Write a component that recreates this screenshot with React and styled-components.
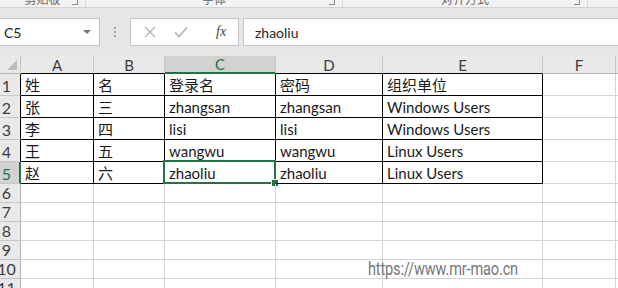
import React from "react";
import styled, { createGlobalStyle } from "styled-components";

const GlobalStyle = createGlobalStyle`
  html, body {
    margin: 0;
    padding: 0;
    background: #ffffff;
    overflow: hidden;
  }
  body {
    font-family: Lato, "Noto Sans CJK SC", sans-serif;
  }
`;

const green = "#217346";
const gridLine = "#d4d4d4";

const columns = [
  { name: "A", width: 73 },
  { name: "B", width: 71 },
  { name: "C", width: 111 },
  { name: "D", width: 107 },
  { name: "E", width: 160 },
  { name: "F", width: 73 },
];

const data = [
  ["姓", "名", "登录名", "密码", "组织单位"],
  ["张", "三", "zhangsan", "zhangsan", "Windows Users"],
  ["李", "四", "lisi", "lisi", "Windows Users"],
  ["王", "五", "wangwu", "wangwu", "Linux Users"],
  ["赵", "六", "zhaoliu", "zhaoliu", "Linux Users"],
];

const ribbonGroups = [
  { label: "剪贴板", width: 86 },
  { label: "字体", width: 257 },
  { label: "对齐方式", width: 245 },
];

const Page = styled.div`
  width: 618px;
  height: 288px;
  display: flex;
  flex-direction: column;
  overflow: hidden;
  background: #e6e6e6;
`;

const RibbonEdge = styled.div`
  height: 7px;
  background: #f3f3f3;
  border-bottom: 1px solid #d2d2d2;
  display: flex;
  overflow: hidden;
  flex-shrink: 0;
`;

const RibbonGroup = styled.div`
  width: ${(p) => p.$width}px;
  flex-shrink: 0;
  position: relative;
  border-right: 1px solid #d8d8d8;
  display: flex;
  justify-content: center;
  box-sizing: border-box;
`;

const GroupLabel = styled.span`
  font-size: 12px;
  line-height: 12px;
  margin-top: -7px;
  color: #6a6a6a;
  font-family: "Noto Sans CJK SC", sans-serif;
`;

const Launcher = styled.span`
  position: absolute;
  right: 7px;
  top: 0;
  width: 5px;
  height: 4px;
  border-right: 1px solid #8a8a8a;
  border-bottom: 1px solid #8a8a8a;
`;

const FormulaBar = styled.div`
  height: 48px;
  display: flex;
  align-items: flex-start;
  padding-top: 10px;
  box-sizing: border-box;
  flex-shrink: 0;
`;

const NameBox = styled.div`
  width: 100px;
  height: 28px;
  box-sizing: border-box;
  background: #ffffff;
  border: 1px solid #c6c6c6;
  border-left: none;
  display: flex;
  align-items: center;
  justify-content: space-between;
  padding: 0 8px 0 4px;
  font-size: 14px;
  color: #262626;
`;

const DropArrow = styled.span`
  width: 0;
  height: 0;
  border-left: 4px solid transparent;
  border-right: 4px solid transparent;
  border-top: 4px solid #777777;
`;

const Grip = styled.div`
  width: 30px;
  height: 28px;
  display: flex;
  flex-direction: column;
  align-items: center;
  justify-content: center;
  gap: 2px;
`;

const GripDot = styled.span`
  width: 2px;
  height: 2px;
  background: #a6a6a6;
`;

const ActionBox = styled.div`
  width: 109px;
  height: 28px;
  box-sizing: border-box;
  background: #ffffff;
  border: 1px solid #c6c6c6;
  display: flex;
  align-items: center;
  padding-left: 13px;
  gap: 18px;
`;

const FxLabel = styled.span`
  font-family: "Liberation Serif", serif;
  font-style: italic;
  font-size: 14px;
  color: #444444;
  margin-left: 10px;
`;

const FormulaInput = styled.div`
  flex: 1;
  margin-left: 4px;
  height: 28px;
  box-sizing: border-box;
  background: #ffffff;
  border: 1px solid #c6c6c6;
  border-right: none;
  display: flex;
  align-items: center;
  padding-left: 11px;
  font-size: 14px;
  color: #262626;
`;

const SheetArea = styled.div`
  position: relative;
  flex: 1;
  background: #ffffff;
`;

const Grid = styled.div`
  display: grid;
  grid-template-columns: 21px ${columns.map((c) => `${c.width}px`).join(" ")} 1fr;
  grid-template-rows: 18px repeat(5, 22px) repeat(6, 19px);
`;

const Corner = styled.div`
  position: relative;
  background: #e9e9e9;
  border-right: 1px solid #c6c6c6;
  border-bottom: 1px solid #b4b4b4;
  box-sizing: border-box;
  &::after {
    content: "";
    position: absolute;
    right: 3px;
    bottom: 3px;
    width: 0;
    height: 0;
    border-left: 10px solid transparent;
    border-bottom: 10px solid #bdbdbd;
  }
`;

const ColHead = styled.div`
  box-sizing: border-box;
  background: ${(p) => (p.$active ? "#d2d2d2" : "#e9e9e9")};
  color: ${(p) => (p.$active ? green : "#3c3c3c")};
  border-right: 1px solid #c6c6c6;
  border-bottom: ${(p) =>
    p.$active ? `2px solid ${green}` : p.$boxed ? "1px solid #000" : "1px solid #b4b4b4"};
  display: flex;
  align-items: center;
  justify-content: center;
  font-size: 15px;
  line-height: 18px;
`;

const RowHead = styled.div`
  box-sizing: border-box;
  background: ${(p) => (p.$active ? "#d2d2d2" : "#e9e9e9")};
  color: ${(p) => (p.$active ? green : "#3c3c3c")};
  border-right: ${(p) =>
    p.$active ? `2px solid ${green}` : p.$boxed ? "1px solid #000" : "1px solid #b4b4b4"};
  border-bottom: 1px solid #c6c6c6;
  display: flex;
  align-items: flex-end;
  justify-content: center;
  padding-right: ${(p) => (p.$active ? 6 : 7)}px;
  font-size: 16px;
  line-height: 19px;
`;

const Cell = styled.div`
  position: relative;
  box-sizing: border-box;
  border-right: 1px solid ${(p) => (p.$boxed ? "#000" : gridLine)};
  border-bottom: 1px solid ${(p) => (p.$boxed ? "#000" : gridLine)};
  display: flex;
  align-items: flex-end;
  padding: 0 3px 0 4px;
  font-size: 15px;
  line-height: 20px;
  color: #1a1a1a;
  white-space: nowrap;
`;

const Selection = styled.div`
  position: absolute;
  left: -2px;
  top: -2px;
  right: -1px;
  bottom: -1px;
  border: 2px solid ${green};
  pointer-events: none;
  &::after {
    content: "";
    position: absolute;
    right: -5px;
    bottom: -5px;
    width: 6px;
    height: 6px;
    background: ${green};
    border: 1px solid #ffffff;
  }
`;

const Watermark = styled.div`
  position: absolute;
  left: 368px;
  top: 202px;
  font-family: Roboto, sans-serif;
  font-size: 18px;
  color: #777777;
  letter-spacing: -0.2px;
  transform: scaleX(0.81);
  transform-origin: left center;
`;

const CrossIcon = () => (
  <svg width="12" height="12" viewBox="0 0 12 12">
    <path d="M1 1 L11 11 M11 1 L1 11" stroke="#b3b3b3" strokeWidth="1.4" fill="none" />
  </svg>
);

const CheckIcon = () => (
  <svg width="14" height="12" viewBox="0 0 14 12">
    <path d="M1 6.5 L5 10.5 L13 1.5" stroke="#b3b3b3" strokeWidth="1.6" fill="none" />
  </svg>
);

const App = () => {
  const totalRows = 11;
  return (
    <Page>
      <GlobalStyle />
      <RibbonEdge>
        {ribbonGroups.map((g) => (
          <RibbonGroup key={g.label} $width={g.width}>
            <GroupLabel>{g.label}</GroupLabel>
            <Launcher />
          </RibbonGroup>
        ))}
      </RibbonEdge>
      <FormulaBar>
        <NameBox>
          C5
          <DropArrow />
        </NameBox>
        <Grip>
          <GripDot />
          <GripDot />
          <GripDot />
        </Grip>
        <ActionBox>
          <CrossIcon />
          <CheckIcon />
          <FxLabel>fx</FxLabel>
        </ActionBox>
        <FormulaInput>zhaoliu</FormulaInput>
      </FormulaBar>
      <SheetArea>
        <Grid>
          <Corner />
          {columns.map((c, i) => (
            <ColHead key={c.name} $active={c.name === "C"} $boxed={i < 5}>
              {c.name}
            </ColHead>
          ))}
          <ColHead />
          {Array.from({ length: totalRows }, (_, r) => (
            <React.Fragment key={r}>
              <RowHead $active={r === 4} $boxed={r < 5}>
                {r + 1}
              </RowHead>
              {columns.map((c, ci) => {
                const boxed = r < 5 && ci < 5;
                const value = boxed ? data[r][ci] : "";
                return (
                  <Cell key={c.name} $boxed={boxed}>
                    {value}
                    {r === 4 && ci === 2 && <Selection />}
                  </Cell>
                );
              })}
              <Cell />
            </React.Fragment>
          ))}
        </Grid>
        <Watermark>https://www.mr-mao.cn</Watermark>
      </SheetArea>
    </Page>
  );
};

export default App;
